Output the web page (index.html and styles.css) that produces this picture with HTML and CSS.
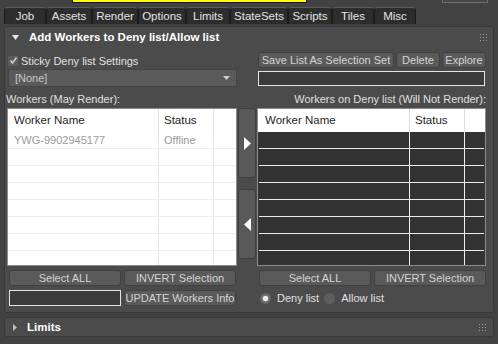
FILE: index.html
```html
<!DOCTYPE html>
<html>
<head>
<meta charset="utf-8">
<link rel="stylesheet" href="styles.css">
</head>
<body>
<div class="top">
  <div class="yellow"></div>
  <div class="topbox"></div>
</div>
<div class="tabs">
  <div class="tab w42">Job</div>
  <div class="tab w46">Assets</div>
  <div class="tab w46">Render</div>
  <div class="tab w48">Options</div>
  <div class="tab w44">Limits</div>
  <div class="tab w58">StateSets</div>
  <div class="tab w44">Scripts</div>
  <div class="tab w42">Tiles</div>
  <div class="tab w42">Misc</div>
</div>
<div class="panel">
  <div class="phead">
    <svg class="tri" width="7" height="5" viewBox="0 0 7 5"><polygon points="0,0 7,0 3.5,5" fill="#e8e8e8"/></svg>
    <span class="ptitle">Add Workers to Deny list/Allow list</span>
    <svg class="grip" width="7" height="7" viewBox="0 0 7 7"><g fill="#9a9a9a"><rect x="0" y="0" width="1" height="1"/><rect x="3" y="0" width="1" height="1"/><rect x="6" y="0" width="1" height="1"/><rect x="0" y="3" width="1" height="1"/><rect x="3" y="3" width="1" height="1"/><rect x="6" y="3" width="1" height="1"/><rect x="0" y="6" width="1" height="1"/><rect x="3" y="6" width="1" height="1"/><rect x="6" y="6" width="1" height="1"/></g></svg>
  </div>
  <div class="grid">
    <div class="l a">
      <span class="check"><svg width="9" height="9" viewBox="0 0 9 9"><polyline points="1.5,4.5 3.5,7 7.5,1.5" fill="none" stroke="#cfcfcf" stroke-width="1.6"/></svg></span>
      <span class="lbl">Sticky Deny list Settings</span>
    </div>
    <div class="r a">
      <div class="btn bsave">Save List As Selection Set</div>
      <div class="btn bdel">Delete</div>
      <div class="btn bexp">Explore</div>
    </div>
    <div class="l b">
      <div class="dropdown"><span>[None]</span>
        <svg width="7" height="4" viewBox="0 0 7 4"><polygon points="0,0 7,0 3.5,4" fill="#cfcfcf"/></svg>
      </div>
    </div>
    <div class="r b">
      <div class="input rin"></div>
    </div>
    <div class="l c"><span class="lbl">Workers (May Render):</span></div>
    <div class="r c cr"><span class="lbl">Workers on Deny list (Will Not Render):</span></div>

    <div class="l d">
      <div class="table light">
        <div class="trow thead"><div class="c1">Worker Name</div><div class="c2">Status</div><div class="c3"></div></div>
        <div class="trow"><div class="c1 dim">YWG-9902945177</div><div class="c2 dim">Offline</div><div class="c3"></div></div>
        <div class="trow"><div class="c1"></div><div class="c2"></div><div class="c3"></div></div>
        <div class="trow"><div class="c1"></div><div class="c2"></div><div class="c3"></div></div>
        <div class="trow"><div class="c1"></div><div class="c2"></div><div class="c3"></div></div>
        <div class="trow"><div class="c1"></div><div class="c2"></div><div class="c3"></div></div>
        <div class="trow"><div class="c1"></div><div class="c2"></div><div class="c3"></div></div>
        <div class="trow"><div class="c1"></div><div class="c2"></div><div class="c3"></div></div>
        <div class="trow"><div class="c1"></div><div class="c2"></div><div class="c3"></div></div>
      </div>
    </div>
    <div class="m d">
      <div class="arrowbtn"><svg width="7" height="13" viewBox="0 0 7 13"><polygon points="0,0 7,6.5 0,13" fill="#ffffff"/></svg></div>
      <div class="arrowbtn"><svg width="7" height="13" viewBox="0 0 7 13"><polygon points="7,0 0,6.5 7,13" fill="#ffffff"/></svg></div>
    </div>
    <div class="r d">
      <div class="table dark">
        <div class="trow thead"><div class="c1">Worker Name</div><div class="c2">Status</div><div class="c3"></div></div>
        <div class="trow"><div class="c1"></div><div class="c2"></div><div class="c3"></div></div>
        <div class="trow"><div class="c1"></div><div class="c2"></div><div class="c3"></div></div>
        <div class="trow"><div class="c1"></div><div class="c2"></div><div class="c3"></div></div>
        <div class="trow"><div class="c1"></div><div class="c2"></div><div class="c3"></div></div>
        <div class="trow"><div class="c1"></div><div class="c2"></div><div class="c3"></div></div>
        <div class="trow"><div class="c1"></div><div class="c2"></div><div class="c3"></div></div>
        <div class="trow"><div class="c1"></div><div class="c2"></div><div class="c3"></div></div>
        <div class="trow"><div class="c1"></div><div class="c2"></div><div class="c3"></div></div>
      </div>
    </div>

    <div class="l e pair">
      <div class="btn half">Select ALL</div>
      <div class="btn half">INVERT Selection</div>
    </div>
    <div class="r e pair">
      <div class="btn half">Select ALL</div>
      <div class="btn half">INVERT Selection</div>
    </div>
    <div class="l f pair">
      <div class="input half"></div>
      <div class="btn half">UPDATE Workers Info</div>
    </div>
    <div class="r f radios">
      <span class="radio on"></span><span class="lbl rl1">Deny list</span>
      <span class="radio"></span><span class="lbl">Allow list</span>
    </div>
  </div>
</div>
<div class="panel2">
  <svg class="tri2" width="4" height="7" viewBox="0 0 4 7"><polygon points="0,0 4,3.5 0,7" fill="#bdbdbd"/></svg>
  <span class="ptitle">Limits</span>
  <svg class="grip" width="7" height="7" viewBox="0 0 7 7"><g fill="#9a9a9a"><rect x="0" y="0" width="1" height="1"/><rect x="3" y="0" width="1" height="1"/><rect x="6" y="0" width="1" height="1"/><rect x="0" y="3" width="1" height="1"/><rect x="3" y="3" width="1" height="1"/><rect x="6" y="3" width="1" height="1"/><rect x="0" y="6" width="1" height="1"/><rect x="3" y="6" width="1" height="1"/><rect x="6" y="6" width="1" height="1"/></g></svg>
</div>
</body>
</html>
```
FILE: styles.css
```css
html, body {
  margin: 0;
  padding: 0;
}
body {
  width: 498px;
  height: 344px;
  overflow: hidden;
  background: #424242;
  font-family: "Liberation Sans", Arial, sans-serif;
  font-size: 11px;
  color: #dcdcdc;
}
.top {
  display: flex;
  height: 4px;
  align-items: flex-start;
}
.yellow {
  margin-left: 72px;
  width: 233px;
  height: 2px;
  background: #ffff00;
  border: 1px solid #141414;
  border-top: 0;
}
.topbox {
  margin-left: 135px;
  width: 44px;
  height: 2px;
  background: #474747;
  border: 1px solid #6e6e6e;
  border-top: 0;
}
.tabs {
  display: flex;
  margin-top: 3px;
  padding-left: 4px;
  height: 17px;
}
.tab {
  box-sizing: border-box;
  height: 17px;
  background: #2d2d2d;
  border: 1px solid #1b1b1b;
  border-top-color: #5c5c5c;
  border-bottom: 0;
  border-radius: 4px 4px 0 0;
  text-align: center;
  line-height: 16px;
  font-size: 11.5px;
  color: #e4e4e4;
}
.w42 { width: 42px; }
.w44 { width: 44px; }
.w46 { width: 46px; }
.w48 { width: 48px; }
.w58 { width: 58px; }
.panel {
  box-sizing: border-box;
  margin: 2px 0 0 4px;
  width: 490px;
  height: 287px;
  background: #4b4b4b;
  border: 1px solid #393939;
  border-radius: 3px;
  padding-left: 2px;
}
.phead {
  height: 20px;
  display: flex;
  align-items: center;
  padding-left: 5px;
}
.tri { margin-right: 10px; }
.ptitle {
  font-weight: bold;
  font-size: 11.5px;
  color: #ffffff;
}
.grip { margin-left: auto; margin-right: 6px; }
.grid {
  margin-top: 5px;
  display: grid;
  grid-template-columns: 230px 20px 229px;
  grid-template-rows: 17px 18px 21px 158px 20px 20px;
}
.l { grid-column: 1; }
.m { grid-column: 2; }
.r { grid-column: 3; }
.a { grid-row: 1; display: flex; align-items: center; }
.b { grid-row: 2; display: flex; align-items: center; }
.c { grid-row: 3; display: flex; align-items: center; padding-top: 3px; }
.d { grid-row: 4; }
.e { grid-row: 5; }
.f { grid-row: 6; }
.cr { justify-content: flex-end; }
.l.c { margin-left: -1px; }
.check {
  box-sizing: border-box;
  width: 10px;
  height: 10px;
  margin-left: 1px;
  margin-right: 3px;
  background: #5c5c5c;
  display: flex;
  align-items: center;
  justify-content: center;
}
.lbl { color: #e0e0e0; }
.r.a { align-items: flex-start; padding-left: 1px; }
.btn {
  box-sizing: border-box;
  height: 16px;
  background: #5a5a5a;
  border: 1px solid #404040;
  border-radius: 3px;
  color: #d4d4d4;
  text-align: center;
  line-height: 14px;
  white-space: nowrap;
  overflow: hidden;
}
.bsave { width: 136px; margin-right: 2px; }
.bdel { width: 44px; margin-right: 2px; }
.bexp { width: 44px; }
.dropdown {
  box-sizing: border-box;
  margin-left: 1px;
  width: 229px;
  height: 18px;
  background: #5a5a5a;
  border: 1px solid #444;
  border-radius: 2px;
  display: flex;
  align-items: center;
  padding: 0 6px 0 6px;
  color: #c8c8c8;
  justify-content: space-between;
}
.input {
  box-sizing: border-box;
  height: 15px;
  background: #3b3b3b;
  border: 1px solid #e4e4e4;
}
.rin { width: 227px; margin-left: 1px; }
.table {
  box-sizing: border-box;
  height: 158px;
  overflow: hidden;
  border: 1px solid #8c8c8c;
}
.light { width: 230px; background: #ffffff; }
.dark { width: 229px; background: #333333; }
.trow {
  display: flex;
  height: 17px;
  box-sizing: border-box;
}
.c1, .c2, .c3 { box-sizing: border-box; height: 100%; line-height: 16px; white-space: nowrap; }
.light .c1 { width: 151px; padding-left: 6px; border-right: 1px solid #e6e6e6; }
.light .c2 { width: 55px; padding-left: 5px; border-right: 1px solid #e6e6e6; }
.light .c3 { flex: 1; }
.light .trow { border-bottom: 1px solid #ececec; }
.dark .c1 { width: 151px; padding-left: 6px; border-right: 1px solid #f0f0f0; }
.dark .c2 { width: 55px; padding-left: 5px; border-right: 1px solid #f0f0f0; }
.dark .c3 { flex: 1; }
.dark .trow { border-bottom: 1px solid #ececec; margin: 0 1px; }
.trow.thead {
  height: 23px;
  border-bottom: 0;
  background: #ffffff;
  color: #1e1e1e;
  font-size: 11.5px;
}
.thead .c1, .thead .c2 { line-height: 23px; }
.light .thead .c1, .light .thead .c2 { border-right-color: #e2e2e2; }
.dark .thead { margin: 0; }
.dark .thead .c1 { width: 152px; padding-left: 7px; border-right-color: #dcdcdc; }
.dark .thead .c2 { border-right-color: #dcdcdc; }
.dim { color: #9a9a9a; }
.m.d {
  display: flex;
  flex-direction: column;
  padding: 0 1px;
  gap: 11px;
}
.arrowbtn {
  box-sizing: border-box;
  height: 70px;
  background: #595959;
  border: 1px solid #3e3e3e;
  border-radius: 3px;
  display: flex;
  align-items: center;
  justify-content: center;
}
.pair {
  display: flex;
  padding: 4px 0 0 2px;
  gap: 3px;
  align-items: flex-start;
}
.half { width: 112px; }
.f.pair { padding-top: 4px; }
.f .input { height: 16px; }
.radios {
  display: flex;
  align-items: center;
  padding: 4px 0 0 3px;
  height: 16px;
}
.radio {
  box-sizing: border-box;
  width: 11px;
  height: 11px;
  border-radius: 50%;
  background: #5e5e5e;
  margin-right: 6px;
  position: relative;
}
.radio.on {
  background: radial-gradient(circle, #e8e8e8 0, #e8e8e8 2.5px, #6a6a6a 3.2px, #5e5e5e 100%);
}
.rl1 { margin-right: 5px; }
.panel2 {
  box-sizing: border-box;
  margin: 4px 0 0 4px;
  width: 490px;
  height: 20px;
  background: #4b4b4b;
  border: 1px solid #393939;
  border-radius: 3px;
  display: flex;
  align-items: center;
  padding-left: 8px;
}
.tri2 { margin-right: 10px; }
.panel2 .grip { margin-right: 7px; }
```
